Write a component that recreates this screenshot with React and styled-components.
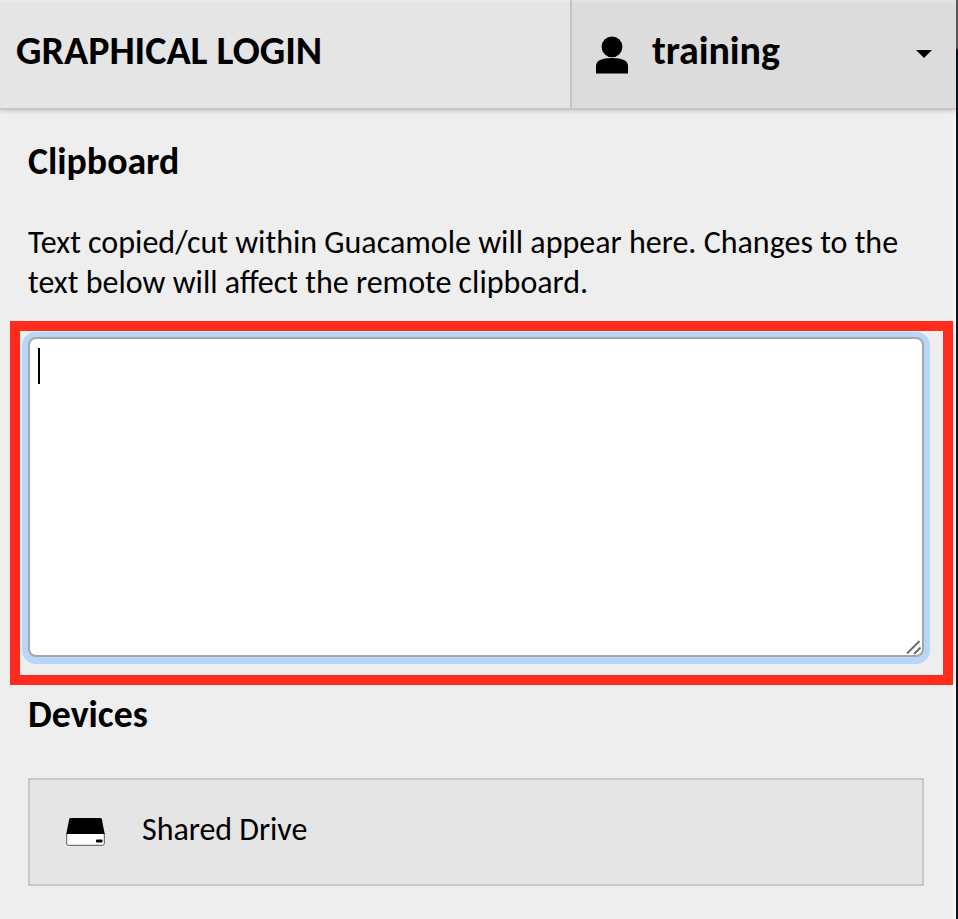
import React from 'react';
import styled, { createGlobalStyle } from 'styled-components';

const GlobalStyle = createGlobalStyle`
  * { box-sizing: border-box; }
  body { margin: 0; background: #eee; color: #000; font-family: Carlito, Calibri, Lato, sans-serif; overflow: hidden; }
`;

const Screen = styled.div`
  display: flex;
  width: 958px;
  height: 919px;
`;

const Panel = styled.div`
  flex: 1;
  min-width: 0;
  display: flex;
  flex-direction: column;
  background: linear-gradient(to right, #eee 951px, #f6f6f6 956px);
`;

const Edge = styled.div`
  width: 2px;
  background: linear-gradient(to bottom, #555 0, #555 48px, #03131f 50px);
`;

const Header = styled.header`
  display: flex;
  height: 110px;
  flex: none;
  background: #e5e5e5;
  border-bottom: 2px solid #c8c8c8;
  box-shadow: 0 1px 4px rgba(0, 0, 0, 0.18), inset 0 3px 3px -2px #f0f0f0;
`;

const Title = styled.h1`
  flex: 1;
  margin: 0;
  padding-left: 16px;
  font-size: 40px;
  line-height: 102px;
  letter-spacing: -0.03px;
  white-space: nowrap;
`;

const UserMenu = styled.div`
  display: flex;
  width: 386px;
  padding: 0 24px 0 23px;
  background: #dcdcdc;
  border-left: 2px solid #c4c4c4;
  box-shadow: inset 0 3px 3px -2px #e8e8e8;
`;

const UserIcon = styled.svg`
  width: 34px;
  height: 38px;
  margin: 36px 23px 0 0;
`;

const UserName = styled.div`
  flex: 1;
  font-size: 40px;
  font-weight: 700;
  line-height: 102px;
  letter-spacing: -0.08px;
`;

const Caret = styled.svg`
  width: 16px;
  height: 9px;
  margin-top: 50px;
`;

const Heading = styled.h2`
  margin: ${(p) => p.$top}px 0 0 28px;
  font-size: 37.8px;
  line-height: 40px;
`;

const Description = styled.p`
  margin: 42px 0 0 28px;
  font-size: 32px;
  line-height: 40px;
  white-space: nowrap;
`;

const Line = styled.span`
  display: block;
`;

const Highlight = styled.div`
  width: 943px;
  height: 364px;
  margin: 18px 0 0 10px;
  padding: 6px 19px 0 8px;
  border: 10px solid #ff2b1c;
`;

const Editor = styled.div`
  display: flex;
  justify-content: space-between;
  width: 896px;
  height: 320px;
  padding: 9px 0 0 8px;
  background: #fff;
  border: 2px solid #a6a6a6;
  border-radius: 8px;
  box-shadow: 0 1px 0 6px #b8d6f5;
`;

const Cursor = styled.span`
  width: 2px;
  height: 36px;
  background: #000;
`;

const Grip = styled.svg`
  width: 16px;
  height: 16px;
  align-self: flex-end;
`;

const Device = styled.div`
  display: flex;
  align-items: flex-start;
  width: 896px;
  height: 108px;
  margin: 44px 0 0 28px;
  padding-left: 36px;
  background: #e5e5e5;
  border: 2px solid #c8c8c8;
`;

const DriveIcon = styled.svg`
  width: 39px;
  height: 29px;
  margin: 37px 37px 0 0;
`;

const DeviceName = styled.div`
  font-size: 32px;
  line-height: 100px;
  letter-spacing: -0.04px;
`;

export default function App() {
  return (
    <>
      <GlobalStyle />
      <Screen>
        <Panel>
          <Header>
            <Title>GRAPHICAL LOGIN</Title>
            <UserMenu>
              <UserIcon viewBox="0 0 34 38">
                <circle cx="17" cy="10.8" r="10.4" />
                <path d="M1 37.5V30Q1 22 17 22T33 30V37.5Z" />
              </UserIcon>
              <UserName>training</UserName>
              <Caret viewBox="0 0 16 9"><path d="M0 0H16L8 8Z" /></Caret>
            </UserMenu>
          </Header>
          <Heading $top={31}>Clipboard</Heading>
          <Description>
            <Line>Text copied/cut within Guacamole will appear here. Changes to the</Line>
            <Line>text below will affect the remote clipboard.</Line>
          </Description>
          <Highlight>
            <Editor>
              <Cursor />
              <Grip viewBox="0 0 16 16" fill="none" stroke="#666" strokeWidth="1.8">
                <path d="M1 14.5L13.5 2M8 15L14.5 8.5" />
              </Grip>
            </Editor>
          </Highlight>
          <Heading $top={9}>Devices</Heading>
          <Device>
            <DriveIcon viewBox="0 0 39 29">
              <path d="M.7 16.5H38.3V26.5Q38.3 28.3 36.5 28.3H2.5Q.7 28.3.7 26.5Z" fill="#fff" stroke="#555" />
              <path d="M4.5 1H34.5Q35.5 1 35.8 2L38.7 17H.3L3.2 2Q3.5 1 4.5 1Z" />
              <rect x="30" y="22.5" width="6.5" height="3" rx="1" />
            </DriveIcon>
            <DeviceName>Shared Drive</DeviceName>
          </Device>
        </Panel>
        <Edge />
      </Screen>
    </>
  );
}
